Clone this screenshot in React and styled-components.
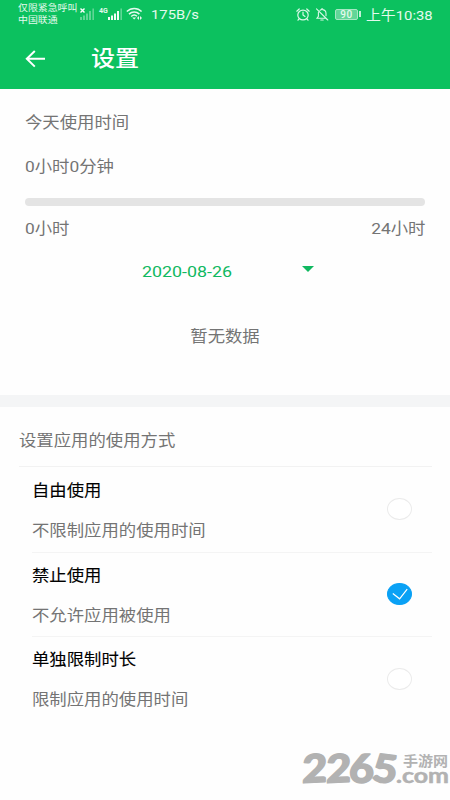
import React, { useState } from "react";
import styled, { createGlobalStyle } from "styled-components";

const options = [
  { id: "free", title: "自由使用", desc: "不限制应用的使用时间" },
  { id: "forbid", title: "禁止使用", desc: "不允许应用被使用" },
  { id: "limit", title: "单独限制时长", desc: "限制应用的使用时间" },
];

const SignalIcon = ({ active }) => (
  <svg width="14" height="12" viewBox="0 0 14 12" fill="#fff">
    <rect x="0" y="9" width="2" height="3" opacity={active ? 0.95 : 0.35} />
    <rect x="3" y="7.5" width="2" height="4.5" opacity={active ? 0.95 : 0.35} />
    <rect x="6" y="5.5" width="2" height="6.5" opacity={active ? 0.95 : 0.35} />
    <rect x="9" y="3" width="2" height="9" opacity={active ? 0.95 : 0.35} />
    <rect x="12.4" y="0.5" width="1.6" height="11.5" opacity="0.35" />
  </svg>
);

const WifiIcon = () => (
  <svg
    width="17"
    height="14"
    viewBox="0 0 17 14"
    fill="none"
    stroke="#e4faee"
    strokeWidth="1.5"
  >
    <path d="M0.8 4.6C5 0.3 11.6 0.3 15.6 4.6" />
    <path d="M3 7.1C6 4.2 10.4 4.2 13.4 7.1" />
    <path d="M5.2 9.5C7 7.8 9.4 7.8 11 9.3" />
    <path d="M6.3 10.4h3.8L8.2 12.6z" fill="#e4faee" stroke="none" />
    <path d="M13 9l-2 2 2 2zM14 9l2 2-2 2z" fill="#e4faee" stroke="none" />
  </svg>
);

const AlarmIcon = () => (
  <svg
    width="14"
    height="13"
    viewBox="0 0 14 13"
    fill="none"
    stroke="#dcf8e9"
    strokeWidth="1.2"
    strokeLinecap="round"
  >
    <ellipse cx="7" cy="7" rx="5.2" ry="4.9" />
    <path d="M7 4.2V7l2 1.4M0.8 3.2L3.2 1M13.2 3.2L10.8 1M3 11l-1 1.2M11 11l1 1.2" />
  </svg>
);

const BellOffIcon = () => (
  <svg
    width="14"
    height="13"
    viewBox="0 0 14 13"
    fill="none"
    stroke="#dcf8e9"
    strokeWidth="1.1"
    strokeLinecap="round"
  >
    <path d="M5 2.4C5.7 1.8 6.2 1.8 6.4 1.6C6.4 0.6 7.8 0.6 7.8 1.6C10 2 11 3.5 11 5.5V7.8" />
    <path d="M3.4 4.4V8.3L2 10.2H10.5M5.8 12H8.2M1.5 0.9L12.8 12" />
  </svg>
);

const BackIcon = () => (
  <svg
    width="22"
    height="18"
    viewBox="0 0 22 18"
    fill="none"
    stroke="#fff"
    strokeWidth="2"
  >
    <path d="M9.8 1L1.8 8.8L9.8 16.6M2 8.8H20" />
  </svg>
);

const Watermark = () => (
  <svg width="150" height="60" viewBox="0 0 150 60">
    <SLogoText fontSize="39" strokeWidth="1.4">
      <text transform="translate(2 43) rotate(-3) skewX(-4)" textLength="25" lengthAdjust="spacingAndGlyphs">2</text>
      <text transform="translate(26 43) rotate(-3) skewX(-4)" textLength="25" lengthAdjust="spacingAndGlyphs">2</text>
      <text transform="translate(49 43)" textLength="25" lengthAdjust="spacingAndGlyphs">6</text>
      <text transform="translate(71 41) rotate(7)" textLength="25" lengthAdjust="spacingAndGlyphs">5</text>
    </SLogoText>
    <SLogoText fontSize="20" strokeWidth="0.5" $weight={700}>
      <text x="96" y="42.5" textLength="53" lengthAdjust="spacingAndGlyphs">.com</text>
    </SLogoText>
    <SLogoText fontSize="14" strokeWidth="0" $weight={700}>
      <text x="103" y="25.5" textLength="45" lengthAdjust="spacingAndGlyphs">手游网</text>
    </SLogoText>
  </svg>
);

const App = () => {
  const [selected, setSelected] = useState("forbid");

  return (
    <SLayout>
      <GlobalStyle />
      <SStatusBar>
        <SCarrier>
          <div>仅限紧急呼叫</div>
          <div>中国联通</div>
        </SCarrier>
        <SSignal>
          <SignalIcon />
          <SNoService width="5" height="5" viewBox="0 0 5 5">
            <path d="M0.5 0.5L4.5 4.5M4.5 0.5L0.5 4.5" stroke="#fff" strokeWidth="1.4" />
          </SNoService>
        </SSignal>
        <SNetwork>4G</SNetwork>
        <SignalIcon active />
        <SWifi>
          <WifiIcon />
        </SWifi>
        <SSpeed>175B/s</SSpeed>
        <SStatusRight>
          <AlarmIcon />
          <BellOffIcon />
          <SBattery>
            <SBatteryLevel>90</SBatteryLevel>
          </SBattery>
          <STime>上午10:38</STime>
        </SStatusRight>
      </SStatusBar>

      <SHeader>
        <BackIcon />
        <STitle>设置</STitle>
      </SHeader>

      <SUsage>
        <SText>今天使用时间</SText>
        <SUsedTime>0小时0分钟</SUsedTime>
        <STrack />
        <SRange>
          <SText>0小时</SText>
          <SText $origin="right">24小时</SText>
        </SRange>
        <SDateRow>
          <SDate>2020-08-26</SDate>
          <SArrow />
        </SDateRow>
        <SEmpty>
          <SText $origin="center">暂无数据</SText>
        </SEmpty>
      </SUsage>

      <SSectionTitle>
        <SText>设置应用的使用方式</SText>
      </SSectionTitle>
      <SList>
        {options.map((item) => (
          <SOption key={item.id} onClick={() => setSelected(item.id)}>
            <div>
              <SOptionTitle>{item.title}</SOptionTitle>
              <SDesc>{item.desc}</SDesc>
            </div>
            <SRadio $checked={selected === item.id}>
              {selected === item.id && (
                <svg width="16" height="12" viewBox="0 0 16 12" fill="none">
                  <path d="M0.8 5.6L7.6 10.8L15.2 1.2" stroke="#fff" strokeWidth="1.2" />
                </svg>
              )}
            </SRadio>
          </SOption>
        ))}
      </SList>

      <SFooter>
        <Watermark />
      </SFooter>
    </SLayout>
  );
};

export default App;

const GlobalStyle = createGlobalStyle`
  * {
    box-sizing: border-box;
  }

  body {
    margin: 0;
    background-color: #fff;
    font-family: Roboto, "Noto Sans CJK SC", sans-serif;
  }

  svg {
    display: block;
    flex-shrink: 0;
  }
`;

const SLayout = styled.div`
  display: flex;
  flex-direction: column;
  width: 450px;
  height: 800px;
  overflow: hidden;
  background-color: #fefefe;
`;

const SStatusBar = styled.div`
  display: flex;
  align-items: center;
  height: 28px;
  padding: 0 17px 0 18px;
  background-color: #0cc15f;
  color: #e4faee;
  white-space: nowrap;
`;

const SCarrier = styled.div`
  width: 62px;
  font-size: 9px;
  line-height: 12px;
  transform: scaleX(1.1);
  transform-origin: left;
`;

const SSignal = styled.div`
  position: relative;
`;

const SNoService = styled.svg`
  position: absolute;
  top: 0;
  left: 0;
`;

const SNetwork = styled.span`
  width: 9px;
  margin: 0 0 7px 5px;
  font-size: 7px;
  font-weight: 700;
  line-height: 8px;
`;

const SWifi = styled.div`
  margin: 0 8px 0 4px;
`;

const SSpeed = styled.span`
  font-size: 13px;
  transform: scaleX(1.14);
  transform-origin: left;
`;

const SStatusRight = styled.div`
  display: flex;
  align-items: center;
  gap: 5px;
  margin-left: auto;
`;

const SBattery = styled.div`
  display: flex;
  align-items: center;
  margin-left: 1px;

  &::after {
    content: "";
    width: 2px;
    height: 6px;
    margin-left: 1px;
    background-color: #c4f0d8;
  }
`;

const SBatteryLevel = styled.div`
  width: 23px;
  height: 11px;
  border: 1px solid #a5e8c3;
  border-radius: 2px;
  background-color: #62d698;
  font-size: 10px;
  font-weight: 500;
  line-height: 10px;
  text-align: center;
  letter-spacing: 0.5px;
`;

const STime = styled.span`
  width: 67px;
  font-size: 13.5px;
  transform: scaleX(1.1);
  transform-origin: left;
`;

const SHeader = styled.header`
  display: flex;
  align-items: center;
  gap: 44px;
  height: 61px;
  padding-left: 25px;
  background-color: #0cc15f;
`;

const STitle = styled.h1`
  margin: 1px 0 0;
  color: #fff;
  font-size: 21.5px;
  font-weight: 500;
  line-height: 28px;
  transform: scaleX(1.12);
  transform-origin: left;
`;

const SText = styled.div`
  color: #747474;
  font-size: 15.5px;
  line-height: 24px;
  white-space: nowrap;
  transform: scaleX(1.12);
  transform-origin: ${({ $origin }) => $origin || "left"};
`;

const SUsage = styled.section`
  height: 318px;
  padding: 22px 25px 0;
  border-bottom: 12px solid #f4f5f6;
`;

const SUsedTime = styled(SText)`
  margin-top: 20px;
`;

const STrack = styled.div`
  height: 8px;
  margin-top: 19px;
  border-radius: 4px;
  background-color: #e4e4e4;
`;

const SRange = styled.div`
  display: flex;
  justify-content: space-between;
  margin-top: 11px;
`;

const SDateRow = styled.div`
  display: flex;
  align-items: center;
  justify-content: space-between;
  width: 172px;
  margin: 19px 0 0 117px;
`;

const SDate = styled(SText)`
  color: #10b860;
  transform: scaleX(1.15);
`;

const SArrow = styled.div`
  border: 6px solid transparent;
  border-top-color: #10b860;
  border-bottom: 0;
  margin-bottom: 6px;
`;

const SEmpty = styled.div`
  display: flex;
  justify-content: center;
  margin-top: 41px;
`;

const SSectionTitle = styled.div`
  height: 59px;
  margin: 0 18px 0 19px;
  padding-top: 22px;
`;

const SList = styled.div`
  margin-left: 19px;
  margin-right: 18px;
  border-top: 1px solid #f2f2f2;
`;

const SOption = styled.div`
  display: flex;
  align-items: center;
  justify-content: space-between;
  height: 84.5px;
  margin-left: 13px;
  padding-right: 20px;
  cursor: pointer;

  & + & {
    border-top: 1px solid #f4f4f4;
  }
`;

const SOptionTitle = styled(SText)`
  margin-top: 3px;
  color: #000;
  -webkit-text-stroke: 0.1px #000;
`;

const SDesc = styled(SText)`
  margin-top: 16px;
`;

const SRadio = styled.div`
  display: flex;
  align-items: center;
  justify-content: center;
  width: 25px;
  height: 22px;
  border: 1px solid ${({ $checked }) => ($checked ? "#0aa1f5" : "#ebebeb")};
  border-radius: 50%;
  background-color: ${({ $checked }) => ($checked ? "#0aa1f5" : "#fff")};
`;

const SFooter = styled.footer`
  display: flex;
  justify-content: flex-end;
  margin-top: auto;
`;

const SLogoText = styled.g`
  fill: #b2b2b2;
  stroke: #b2b2b2;
  stroke-linejoin: round;
  font-family: Lato, "Noto Sans CJK SC", sans-serif;
  font-weight: ${({ $weight }) => $weight || 900};
`;
